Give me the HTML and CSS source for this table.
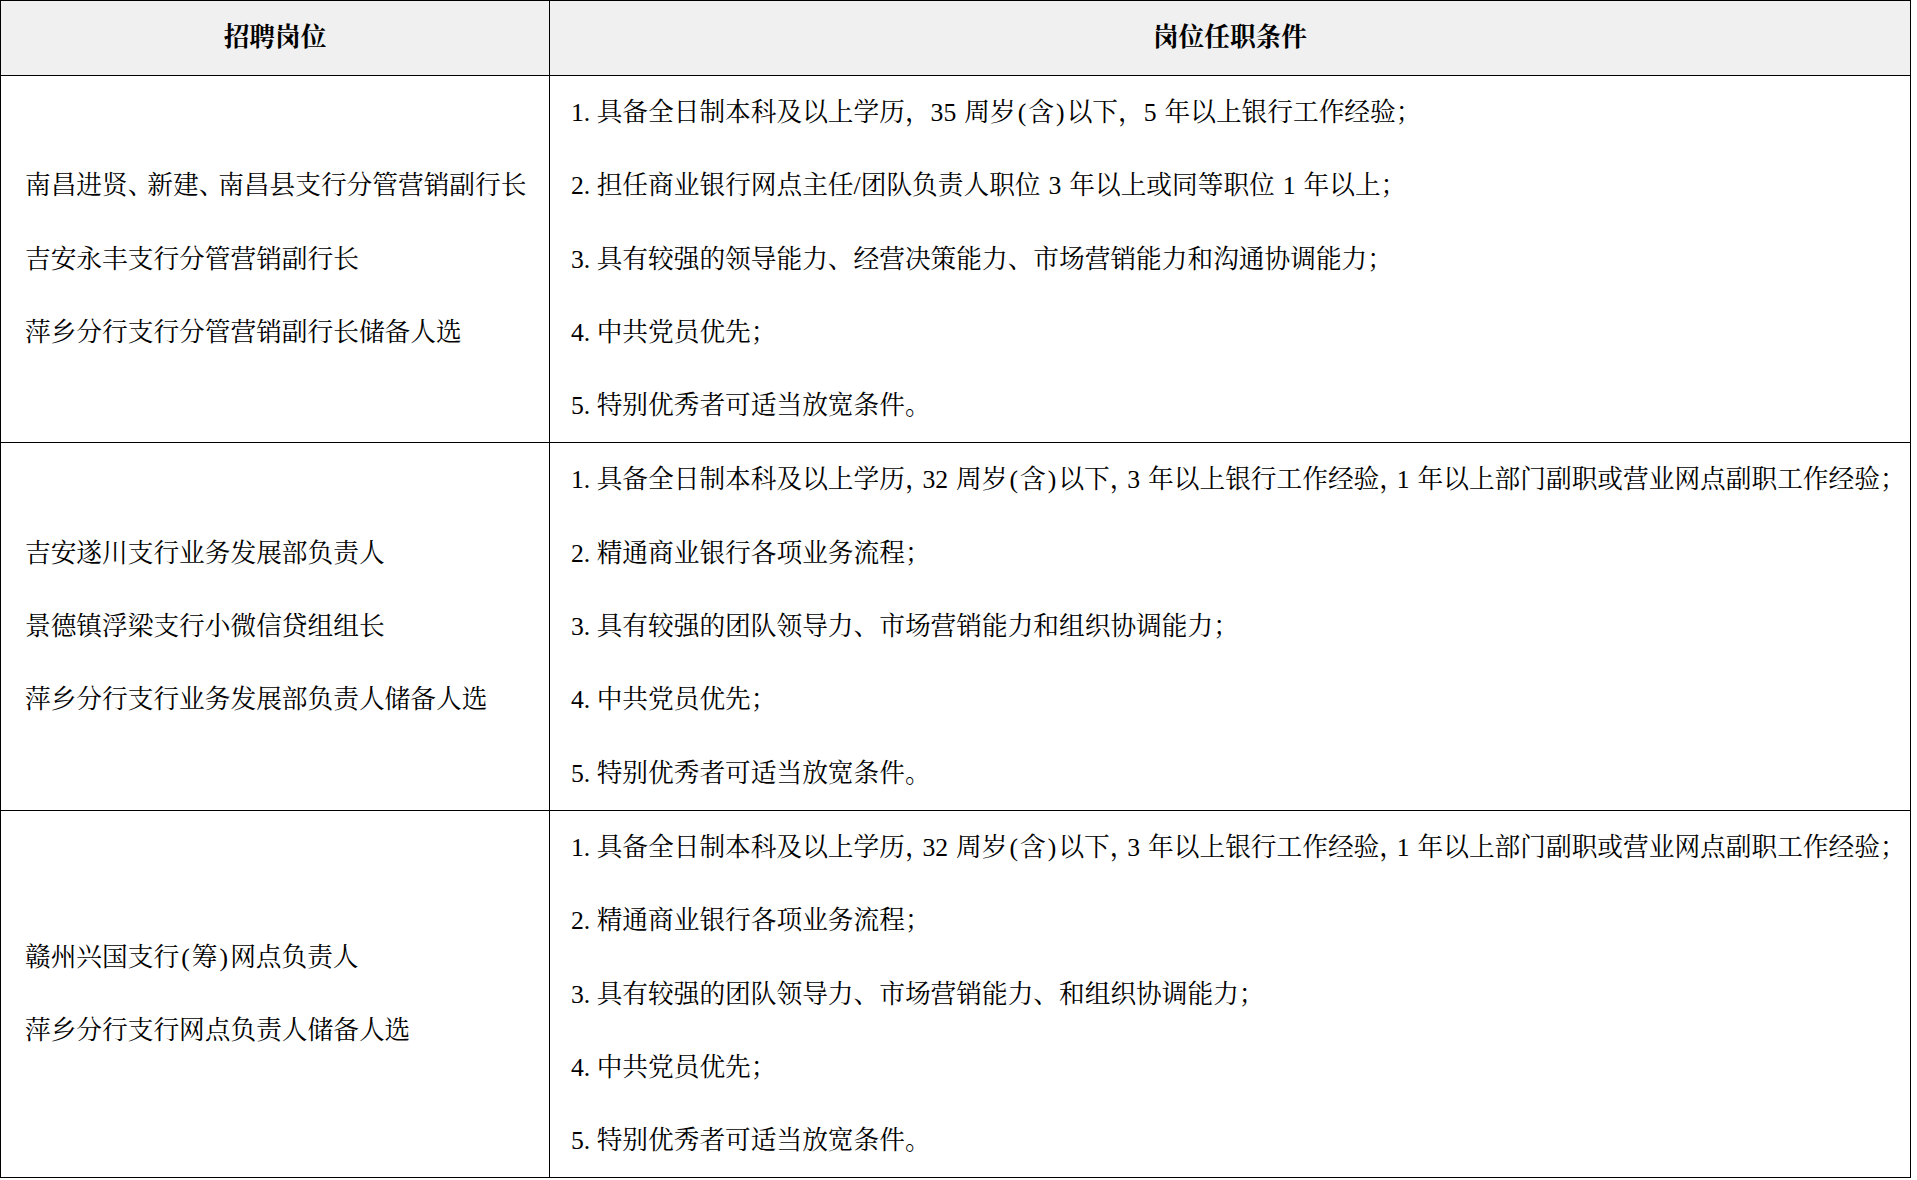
FILE: index.html
```html
<!DOCTYPE html>
<html lang="zh-CN">
<head>
<meta charset="utf-8">
<title>招聘岗位</title>
<link rel="stylesheet" href="styles.css">
</head>
<body>
<table class="jobs">
  <colgroup>
    <col class="col-pos">
    <col class="col-req">
  </colgroup>
  <thead>
    <tr class="head-row">
      <th>招聘岗位</th>
      <th>岗位任职条件</th>
    </tr>
  </thead>
  <tbody>
    <tr class="row">
      <td class="pos">
        <p>南昌进贤<span class="dun">、</span>新建<span class="dun">、</span>南昌县支行分管营销副行长</p>
        <p>吉安永丰支行分管营销副行长</p>
        <p>萍乡分行支行分管营销副行长储备人选</p>
      </td>
      <td class="req">
        <p><span class="num">1.</span>具备全日制本科及以上学历，35 周岁<span class="par">(</span>含<span class="par">)</span>以下，5 年以上银行工作经验；</p>
        <p><span class="num">2.</span>担任商业银行网点主任/团队负责人职位 3 年以上或同等职位 1 年以上；</p>
        <p><span class="num">3.</span>具有较强的领导能力、经营决策能力、市场营销能力和沟通协调能力；</p>
        <p><span class="num">4.</span>中共党员优先；</p>
        <p><span class="num">5.</span>特别优秀者可适当放宽条件。</p>
      </td>
    </tr>
    <tr class="row">
      <td class="pos">
        <p>吉安遂川支行业务发展部负责人</p>
        <p>景德镇浮梁支行小微信贷组组长</p>
        <p>萍乡分行支行业务发展部负责人储备人选</p>
      </td>
      <td class="req">
        <p><span class="num">1.</span>具备全日制本科及以上学历<span class="cm">，</span>32 周岁<span class="par">(</span>含<span class="par">)</span>以下<span class="cm">，</span>3 年以上银行工作经验<span class="cm">，</span>1 年以上部门副职或营业网点副职工作经验；</p>
        <p><span class="num">2.</span>精通商业银行各项业务流程；</p>
        <p><span class="num">3.</span>具有较强的团队领导力、市场营销能力和组织协调能力；</p>
        <p><span class="num">4.</span>中共党员优先；</p>
        <p><span class="num">5.</span>特别优秀者可适当放宽条件。</p>
      </td>
    </tr>
    <tr class="row">
      <td class="pos">
        <p>赣州兴国支行<span class="par">(</span>筹<span class="par">)</span>网点负责人</p>
        <p>萍乡分行支行网点负责人储备人选</p>
      </td>
      <td class="req">
        <p><span class="num">1.</span>具备全日制本科及以上学历<span class="cm">，</span>32 周岁<span class="par">(</span>含<span class="par">)</span>以下<span class="cm">，</span>3 年以上银行工作经验<span class="cm">，</span>1 年以上部门副职或营业网点副职工作经验；</p>
        <p><span class="num">2.</span>精通商业银行各项业务流程；</p>
        <p><span class="num">3.</span>具有较强的团队领导力、市场营销能力、和组织协调能力；</p>
        <p><span class="num">4.</span>中共党员优先；</p>
        <p><span class="num">5.</span>特别优秀者可适当放宽条件。</p>
      </td>
    </tr>
  </tbody>
</table>
</body>
</html>
```

FILE: styles.css
```css
html, body {
  margin: 0;
  padding: 0;
  background: #ffffff;
}

body {
  font-family: "Liberation Serif", "Noto Serif CJK SC", "Noto Sans CJK SC", serif;
  font-size: 25.7px;
  color: #000000;
}

.jobs {
  border-collapse: collapse;
  width: 1911px;
  table-layout: fixed;
}

.col-pos {
  width: 549px;
}

.jobs th,
.jobs td {
  border: 1px solid #000000;
  padding: 0;
}

.jobs .head-row th {
  height: 74px;
  background: #f0f0f0;
  font-weight: bold;
  text-align: center;
  vertical-align: middle;
  line-height: 74px;
}

.jobs .row td {
  vertical-align: middle;
  line-height: 73.3px;
}

.jobs .pos {
  padding-left: 24px;
}

.jobs .req {
  padding-left: 21px;
}

.row p {
  margin: 0;
  white-space: nowrap;
  word-spacing: 0.06em;
}

.num {
  margin-right: 0.25em;
}

.par {
  padding: 0 0.08em;
}

.cm {
  letter-spacing: -0.32em;
}

.dun {
  letter-spacing: -0.24em;
}
```
